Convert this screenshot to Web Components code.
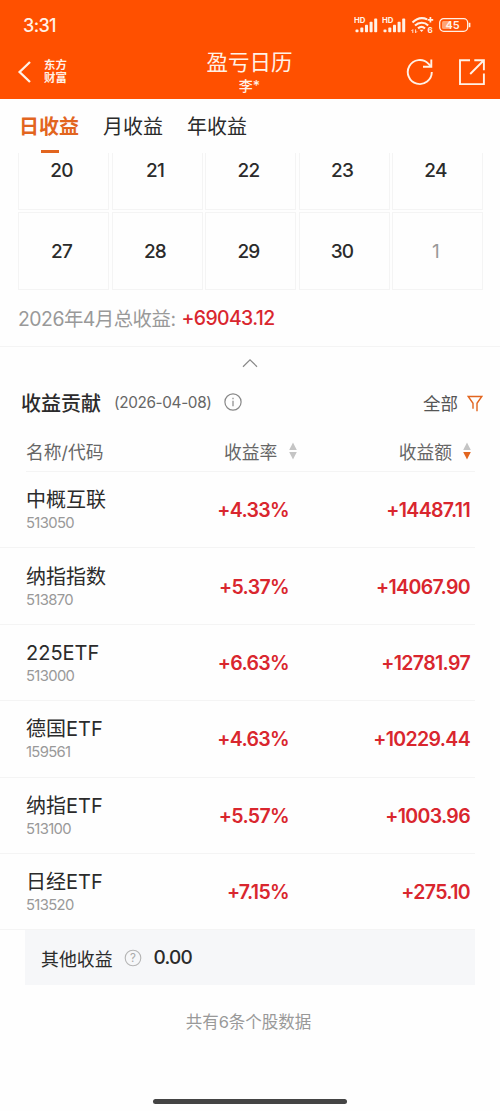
<!DOCTYPE html>
<html lang="zh-CN">
<head>
<meta charset="UTF-8">
<meta name="viewport" content="width=device-width, initial-scale=1">
<title>盈亏日历</title>
<style>
  body {
    margin: 0;
    background: #fefefe;
    font-family: Inter, "Noto Sans CJK SC", sans-serif;
    color: #2b2b2b;
    --brand: #ff5000;
    --accent: #e2651f;
    --rise: #d9262e;
    --line: #f4f4f4;
  }
</style>
</head>
<body>
<profit-page></profit-page>

<script>
// Profit calendar - Web Components

class BaseElement extends HTMLElement {
  constructor() {
    super();
    this.attachShadow({ mode: 'open' });
  }

  connectedCallback() {
    this.shadowRoot.innerHTML = this.render();
  }
}

class StatusBar extends BaseElement {
  render() {
    const signal = `
      <svg width="24" height="18" viewBox="0 0 24 18" fill="#fff1e6">
        <text x="0" y="6.6" font-size="7.6" font-weight="700" textLength="11.5" lengthAdjust="spacingAndGlyphs">HD</text>
        <rect x="1.5" y="13.6" width="3" height="2.6" rx=".8"/>
        <rect x="6.3" y="11.6" width="3" height="4.6" rx=".8"/>
        <rect x="11" y="8.8" width="3" height="7.4" rx=".8"/>
        <rect x="15.6" y="5.8" width="3" height="10.4" rx=".8"/>
        <rect x="20.2" y="2.6" width="3" height="13.6" rx=".8"/>
      </svg>`;
    return `
      <style>
        :host {
          display: flex;
          justify-content: space-between;
          align-items: center;
          height: 50px;
          padding: 0 29px 0 23px;
          color: #fff1e6;
        }
        .time { font-size: 18px; font-weight: 500; letter-spacing: -0.65px; }
        .icons { display: flex; align-items: center; gap: 4px; }
        svg { display: block; }
      </style>
      <span class="time">3:31</span>
      <div class="icons">
        ${signal}
        ${signal}
        <svg width="24" height="18" viewBox="0 0 24 18" fill="none" stroke="#fff1e6" stroke-width="2.1">
          <path d="M2.5 6.5C6.8 2.3 12.4 1.2 17.2 3.4"/>
          <path d="M5 9.6c3.8-3.7 9.5-3.8 13.2-.2"/>
          <path d="M8 12.4c2.1-1.9 5-1.9 7 0"/>
          <path d="M9.5 13.8L11.6 16l2-2.2z" fill="#fff1e6" stroke="none"/>
          <path d="M20.4 1v5.6M17.6 3.8h5.6" stroke-width="1.7"/>
          <path d="M2.8 17v-3.4L1.4 15M5.6 13.4v3.4L7 15.4" stroke-width=".9"/>
          <text x="17.4" y="17" font-size="8" font-weight="700" fill="#fff1e6" stroke="none">6</text>
        </svg>
        <svg width="33" height="16" viewBox="0 0 33 16">
          <rect x="1.7" y="1.7" width="28" height="12.6" rx="4" fill="none" stroke="#fff1e6" stroke-width="1.3"/>
          <rect x="4" y="4" width="9" height="8" rx="1.5" fill="#ffa473"/>
          <path d="M31.6 5.8v4.4" stroke="#fff1e6" stroke-width="1.6"/>
          <text x="14.6" y="12" text-anchor="middle" font-size="11" font-weight="600" fill="#fff1e6">45</text>
        </svg>
      </div>`;
  }
}

class NavHeader extends BaseElement {
  render() {
    return `
      <style>
        :host {
          display: grid;
          grid-template-columns: 1fr auto 1fr;
          align-items: center;
          height: 49px;
          padding: 0 14px 7px 17px;
          box-sizing: border-box;
          color: #fff1e6;
        }
        .left { display: flex; align-items: center; gap: 13px; }
        .logo { font-size: 11.4px; line-height: 12.4px; font-weight: 700; }
        .title { text-align: center; padding-right: 4px; }
        h1 { margin: 0; font-size: 21.5px; line-height: 25px; font-weight: 400; }
        .user { font-size: 14px; line-height: 19px; margin: 1px 0 -2px; font-weight: 500; }
        .right { display: flex; justify-content: flex-end; align-items: center; gap: 24px; }
        svg { display: block; fill: none; stroke: currentColor; }
      </style>
      <div class="left">
        <svg width="14" height="22" viewBox="0 0 14 22" stroke-width="2.3"><path d="M13 1L2.6 11 13 21"/></svg>
        <div class="logo">东方<br>财富</div>
      </div>
      <div class="title">
        <h1><slot></slot></h1>
        <div class="user"><slot name="user"></slot></div>
      </div>
      <div class="right">
        <svg width="28" height="28" viewBox="0 0 28 28" stroke-width="1.9">
          <path d="M25.8 14A12 12 0 1 1 22.3 5.6L24.6 8"/>
          <path d="M25.3 1.5v7.3H17"/>
        </svg>
        <svg width="28" height="28" viewBox="0 0 28 28" stroke-width="1.9">
          <path d="M12 2.2H2v23.9h23.9V15.5"/>
          <path d="M12.2 16L25.6 2.5M16.3 2.2h9.6v10"/>
        </svg>
      </div>`;
  }
}

class PeriodTabs extends BaseElement {
  render() {
    return `
      <style>
        :host { display: flex; gap: 24px; height: 54px; padding-left: 19px; box-sizing: border-box; }
        span {
          display: flex;
          flex-direction: column;
          justify-content: space-between;
          align-items: center;
          font-size: 20px;
          line-height: 56px;
        }
        .active { color: var(--accent); font-weight: 600; }
        .active::after {
          content: "";
          width: 18px;
          height: 3px;
          margin: -5px 0 0 2px;
          flex: none;
          background: var(--accent);
        }
      </style>
      <span class="active">日收益</span>
      <span>月收益</span>
      <span>年收益</span>`;
  }
}

class CalendarGrid extends BaseElement {
  render() {
    const days = ['20', '21', '22', '23', '24', '27', '28', '29', '30', '1'];
    return `
      <style>
        :host {
          display: flex;
          flex-direction: column;
          justify-content: flex-end;
          height: 137px;
          padding: 0 17px 0 18px;
          overflow: hidden;
        }
        .grid {
          display: grid;
          grid-template-columns: repeat(5, 1fr);
          grid-auto-rows: 78px;
          gap: 2.5px;
          flex: none;
        }
        .day {
          display: flex;
          align-items: center;
          justify-content: center;
          box-sizing: border-box;
          border: 1px solid var(--line);
          padding-right: 4px;
          font-size: 19px;
          font-weight: 550;
          letter-spacing: -0.8px;
        }
        .muted { color: #999; font-weight: 400; }
      </style>
      <div class="grid">
        ${days.map(d => `<div class="day ${d === '1' ? 'muted' : ''}">${d}</div>`).join('')}
      </div>`;
  }
}

class MonthTotal extends BaseElement {
  render() {
    return `
      <style>
        :host {
          display: flex;
          align-items: center;
          height: 56px;
          padding-left: 18px;
          border-bottom: 1px solid var(--line);
          font-size: 19.4px;
          color: #999;
          letter-spacing: -0.5px;
        }
        span { margin-top: -2px; }
        b { margin-left: 6px; font-weight: 450; color: var(--rise); letter-spacing: -0.6px; }
      </style>
      <span><slot></slot></span><b><slot name="value"></slot></b>`;
  }
}

class CollapseArrow extends BaseElement {
  render() {
    return `
      <style>
        :host { display: flex; justify-content: center; align-items: center; height: 32px; }
      </style>
      <svg width="16" height="10" viewBox="0 0 16 10" fill="none" stroke="#888" stroke-width="1.2"><path d="M1 8.7L8 1.8l7 6.9"/></svg>`;
  }
}

class SectionTitle extends BaseElement {
  render() {
    return `
      <style>
        :host { display: flex; align-items: center; height: 48px; padding: 0 17px 2px 21px; box-sizing: border-box; }
        h2 { margin: 0; font-size: 20px; font-weight: 500; }
        .date { margin-left: 13px; font-size: 15.3px; letter-spacing: -0.35px; color: #666; }
        .info { margin-left: 13px; }
        .filter { margin-left: auto; display: flex; align-items: center; gap: 9px; font-size: 17.5px; color: #555; }
        svg { display: block; }
        .filter svg { margin-top: 2px; }
      </style>
      <h2>收益贡献</h2>
      <span class="date">(2026-04-08)</span>
      <svg class="info" width="18" height="18" viewBox="0 0 18 18" fill="none" stroke="#888" stroke-width="1.2">
        <circle cx="9" cy="9" r="8.1"/>
        <path d="M9 7.8v5.4M9 4.7v1.5"/>
      </svg>
      <span class="filter">全部
        <svg width="16" height="17" viewBox="0 0 16 17" fill="none" stroke="#e2651f" stroke-width="1.4">
          <path d="M6 13.8V8.3L1.2 1.5h13.6L10 8.3v7.9"/>
        </svg>
      </span>`;
  }
}

// Pair of triangles; dir="desc" lights the lower one
class SortMark extends BaseElement {
  render() {
    const down = this.getAttribute('dir') === 'desc' ? '#e2651f' : '#c4c4c4';
    return `
      <style>
        :host { display: inline-flex; }
      </style>
      <svg width="8" height="18" viewBox="0 0 8 18">
        <path d="M4 .5L7.8 8H.2z" fill="#c4c4c4"/>
        <path d="M4 17.5L7.8 10H.2z" fill="${down}"/>
      </svg>`;
  }
}

class TableHead extends BaseElement {
  render() {
    return `
      <style>
        :host {
          display: grid;
          grid-template-columns: 1fr 77px 174px;
          align-items: center;
          height: 45px;
          padding-top: 4px;
          box-sizing: border-box;
          margin: 0 25px 0 26px;
          border-bottom: 1px solid var(--line);
          font-size: 17.8px;
          color: #666;
        }
        span { display: flex; align-items: center; white-space: nowrap; }
        .rate { gap: 12px; }
        .amount { justify-content: flex-end; gap: 11px; padding-right: 4px; }
      </style>
      <span>名称/代码</span>
      <span class="rate">收益率<sort-mark></sort-mark></span>
      <span class="amount">收益额<sort-mark dir="desc"></sort-mark></span>`;
  }
}

class FundRow extends BaseElement {
  render() {
    return `
      <style>
        :host {
          display: grid;
          grid-template-columns: 1fr 110px 181px;
          align-items: center;
          height: 76.4px;
          box-sizing: border-box;
          margin-right: 25px;
          padding: 1px 5px 0 26px;
          border-bottom: 1px solid var(--line);
        }
        .name { font-size: 20px; line-height: 26px; }
        .code { font-size: 14.8px; line-height: 20px; letter-spacing: -0.65px; color: #999; }
        .num {
          text-align: right;
          font-size: 19.5px;
          font-weight: 570;
          letter-spacing: -0.65px;
          color: var(--rise);
        }
      </style>
      <div>
        <div class="name">${this.getAttribute('name')}</div>
        <div class="code">${this.getAttribute('code')}</div>
      </div>
      <div class="num">${this.getAttribute('rate')}</div>
      <div class="num">${this.getAttribute('amount')}</div>`;
  }
}

class OtherProfit extends BaseElement {
  render() {
    return `
      <style>
        :host {
          display: flex;
          align-items: center;
          height: 55px;
          margin: 0 25px 0 25px;
          padding-left: 16px;
          background: #f6f7f9;
          font-size: 17.9px;
        }
        svg { margin: 0 12px 0 11px; }
        b { font-size: 19px; font-weight: 500; letter-spacing: -0.8px; }
      </style>
      <span>其他收益</span>
      <svg width="18" height="18" viewBox="0 0 18 18">
        <circle cx="9" cy="9" r="7.8" fill="none" stroke="#b5b5b5" stroke-width="1.1"/>
        <text x="9" y="13.1" text-anchor="middle" font-size="11.5" fill="#aaa">?</text>
      </svg>
      <b>0.00</b>`;
  }
}

class PageFooter extends BaseElement {
  render() {
    return `
      <style>
        :host {
          display: flex;
          flex-direction: column;
          justify-content: space-between;
          align-items: center;
          flex: 1;
          padding: 25px 0 7.5px;
          font-size: 16.5px;
          line-height: 24px;
          color: #999;
        }
        .count { padding-right: 3px; }
        .home { width: 194px; height: 5px; border-radius: 3px; background: #444; }
      </style>
      <div class="count">共有6条个股数据</div>
      <div class="home"></div>`;
  }
}

class ProfitPage extends BaseElement {
  render() {
    const funds = [
      ['中概互联', '513050', '+4.33%', '+14487.11'],
      ['纳指指数', '513870', '+5.37%', '+14067.90'],
      ['225ETF', '513000', '+6.63%', '+12781.97'],
      ['德国ETF', '159561', '+4.63%', '+10229.44'],
      ['纳指ETF', '513100', '+5.57%', '+1003.96'],
      ['日经ETF', '513520', '+7.15%', '+275.10']
    ];
    return `
      <style>
        :host { display: flex; flex-direction: column; height: 1111px; overflow: hidden; }
        header { background: var(--brand); }
      </style>
      <header>
        <status-bar></status-bar>
        <nav-header>盈亏日历<span slot="user">李*</span></nav-header>
      </header>
      <period-tabs></period-tabs>
      <calendar-grid></calendar-grid>
      <month-total>2026年4月总收益:<span slot="value">+69043.12</span></month-total>
      <collapse-arrow></collapse-arrow>
      <section-title></section-title>
      <table-head></table-head>
      ${funds.map(([name, code, rate, amount]) =>
        `<fund-row name="${name}" code="${code}" rate="${rate}" amount="${amount}"></fund-row>`).join('')}
      <other-profit></other-profit>
      <page-footer></page-footer>`;
  }
}

customElements.define('status-bar', StatusBar);
customElements.define('nav-header', NavHeader);
customElements.define('period-tabs', PeriodTabs);
customElements.define('calendar-grid', CalendarGrid);
customElements.define('month-total', MonthTotal);
customElements.define('collapse-arrow', CollapseArrow);
customElements.define('section-title', SectionTitle);
customElements.define('sort-mark', SortMark);
customElements.define('table-head', TableHead);
customElements.define('fund-row', FundRow);
customElements.define('other-profit', OtherProfit);
customElements.define('page-footer', PageFooter);
customElements.define('profit-page', ProfitPage);
</script>
</body>
</html>
